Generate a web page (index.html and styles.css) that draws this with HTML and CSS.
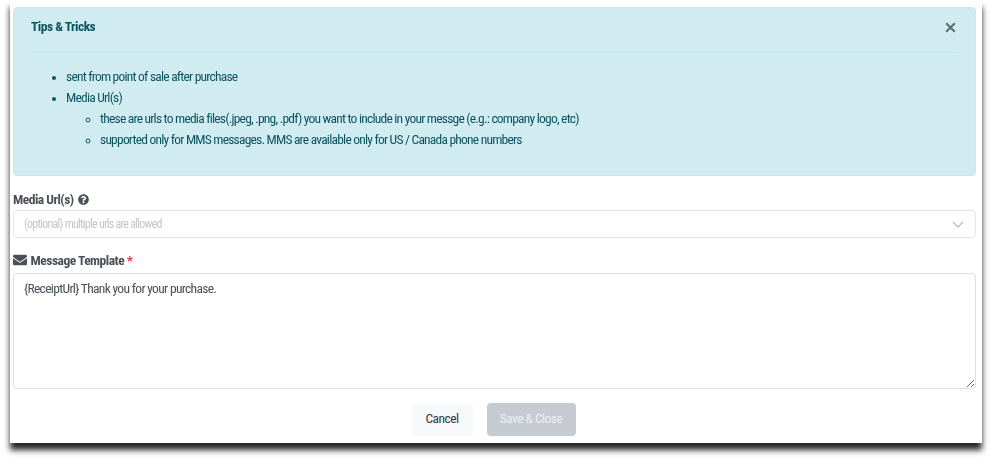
FILE: index.html
```html
<!DOCTYPE html>
<html lang="en">
<head>
    <meta charset="UTF-8">
    <title>Message Template</title>
    <link rel="stylesheet" href="styles.css">
</head>
<body>
    <div class="sheet">
        <section class="alert">
            <div class="alert-head">
                <h4>Tips &amp; Tricks</h4>
                <svg class="close" viewBox="0 0 12 12"><path d="M2 2l8 8M10 2l-8 8"/></svg>
            </div>
            <ul class="tips">
                <li>sent from point of sale after purchase</li>
                <li>Media Url(s)
                    <ul>
                        <li>these are urls to media files(.jpeg, .png, .pdf) you want to include in your messge (e.g.: company logo, etc)</li>
                        <li>supported only for MMS messages. MMS are available only for US / Canada phone numbers</li>
                    </ul>
                </li>
            </ul>
        </section>

        <label class="field-label">Media Url(s)
            <svg class="help" viewBox="0 0 512 512"><path d="M504 256c0 136.997-111.043 248-248 248S8 392.997 8 256C8 119.083 119.043 8 256 8s248 111.083 248 248zM262.655 90c-54.497 0-89.255 22.957-116.549 63.758-3.536 5.286-2.353 12.415 2.715 16.258l34.699 26.31c5.205 3.947 12.621 3.008 16.665-2.122 17.864-22.658 30.113-35.797 57.303-35.797 20.429 0 45.698 13.148 45.698 32.958 0 14.976-12.363 22.667-32.534 33.976C247.128 238.528 216 254.941 216 296v4c0 6.627 5.373 12 12 12h56c6.627 0 12-5.373 12-12v-1.333c0-28.462 83.186-29.647 83.186-106.667 0-58.002-60.165-102-116.531-102zM256 338c-25.365 0-46 20.635-46 46 0 25.364 20.635 46 46 46s46-20.636 46-46c0-25.365-20.635-46-46-46z"/></svg>
        </label>
        <div class="select">
            <span>(optional) multiple urls are allowed</span>
            <svg class="chevron" viewBox="0 0 12 7"><path d="M1 1l5 5 5-5"/></svg>
        </div>

        <label class="field-label template-label">
            <svg class="envelope" viewBox="0 0 512 512"><path d="M502.3 190.8c3.9-3.1 9.7-.2 9.7 4.7V400c0 26.5-21.5 48-48 48H48c-26.5 0-48-21.5-48-48V195.6c0-5 5.7-7.8 9.7-4.7 22.4 17.4 52.1 39.5 154.1 113.6 21.1 15.4 56.7 47.8 92.2 47.6 35.7.3 72-32.8 92.3-47.6 102-74.1 131.6-96.3 154-113.7zM256 320c23.2.4 56.6-29.2 73.4-41.4 132.7-96.3 142.8-104.7 173.4-128.7 5.8-4.5 9.2-11.5 9.2-18.9v-19c0-26.5-21.5-48-48-48H48C21.5 64 0 85.5 0 112v19c0 7.4 3.4 14.3 9.2 18.9 30.6 23.9 40.7 32.4 173.4 128.7 16.8 12.2 50.2 41.8 73.4 41.4z"/></svg>
            Message Template <span class="required">*</span>
        </label>
        <textarea class="template">{ReceiptUrl} Thank you for your purchase.</textarea>

        <div class="actions">
            <button class="btn btn-cancel">Cancel</button>
            <button class="btn btn-save">Save &amp; Close</button>
        </div>
    </div>
</body>
</html>
```

FILE: styles.css
```css
* {
    margin: 0;
    padding: 0;
    box-sizing: border-box;
}

html,
body {
    height: 100%;
    background-color: #fff;
    overflow: hidden;
}

body {
    font-family: Roboto, "Liberation Sans", sans-serif;
    font-size: 13.5px;
    font-stretch: 75%;
    letter-spacing: -0.78px;
    color: #495057;
}

/* the whole shot is slightly soft */
.sheet {
    width: 972px;
    height: 443px;
    margin-left: 10px;
    padding: 7px 6px 0 3px;
    background-color: #fff;
    box-shadow: 0 7px 6px rgba(0, 0, 0, 0.85);
    filter: blur(0.45px);
}

.alert {
    height: 169px;
    padding: 0 18px 0 17px;
    background-color: #d1ecf1;
    border: 1px solid #c9e7ec;
    border-radius: 4px;
    color: #0c5460;
}

.alert-head {
    display: flex;
    justify-content: space-between;
    align-items: center;
    height: 45px;
    padding-bottom: 8px;
    border-bottom: 1px solid #bee5eb;
}

.alert-head h4 {
    font-size: 13.5px;
    font-weight: 700;
    letter-spacing: -0.5px;
}

.close {
    width: 13px;
    height: 13px;
    margin-top: 2px;
    fill: none;
    stroke: #5f6f73;
    stroke-width: 2;
}

.tips {
    margin-top: 13px;
    padding-left: 35px;
    line-height: 21px;
}

.tips ul {
    padding-left: 34px;
}

.tips li::marker {
    font-size: 12px;
}

.field-label {
    display: block;
    margin-top: 14px;
    height: 20px;
    line-height: 18px;
    font-weight: 700;
    letter-spacing: -0.5px;
}

.help {
    width: 11px;
    height: 11px;
    margin-left: 2px;
    vertical-align: -1px;
    fill: #495057;
}

.envelope {
    width: 14px;
    height: 14px;
    margin-right: 1px;
    vertical-align: -2px;
    fill: #495057;
}

.required {
    color: #dc3545;
}

.select {
    display: flex;
    justify-content: space-between;
    align-items: center;
    height: 28px;
    padding: 0 11px 0 10px;
    border: 1px solid #e3e5e8;
    border-radius: 4px;
    font-size: 12px;
    letter-spacing: -0.75px;
    color: #c3c6c9;
}

.chevron {
    width: 12px;
    height: 7px;
    fill: none;
    stroke: #b4b8bb;
    stroke-width: 1.2;
}

.template-label {
    margin-top: 14px;
    height: 21px;
    line-height: 16px;
}

.template {
    display: block;
    width: 100%;
    height: 116px;
    padding: 4px 10px;
    border: 1px solid #dcdfe3;
    border-radius: 4px;
    font-family: inherit;
    font-size: 13.5px;
    font-stretch: 75%;
    letter-spacing: -0.68px;
    line-height: 21px;
    color: #495057;
    outline: none;
}

.actions {
    display: flex;
    justify-content: center;
    gap: 14px;
    margin-top: 14px;
    margin-right: 2px;
}

.btn {
    height: 33px;
    padding-bottom: 3px;
    border: none;
    border-radius: 4px;
    font-family: inherit;
    font-size: 13.5px;
    font-stretch: 75%;
    letter-spacing: -0.55px;
}

.btn-cancel {
    width: 61px;
    background-color: #f8f9fa;
    color: #343a40;
}

.btn-save {
    width: 89px;
    background-color: #c6cbd1;
    color: #eceef0;
}
```
